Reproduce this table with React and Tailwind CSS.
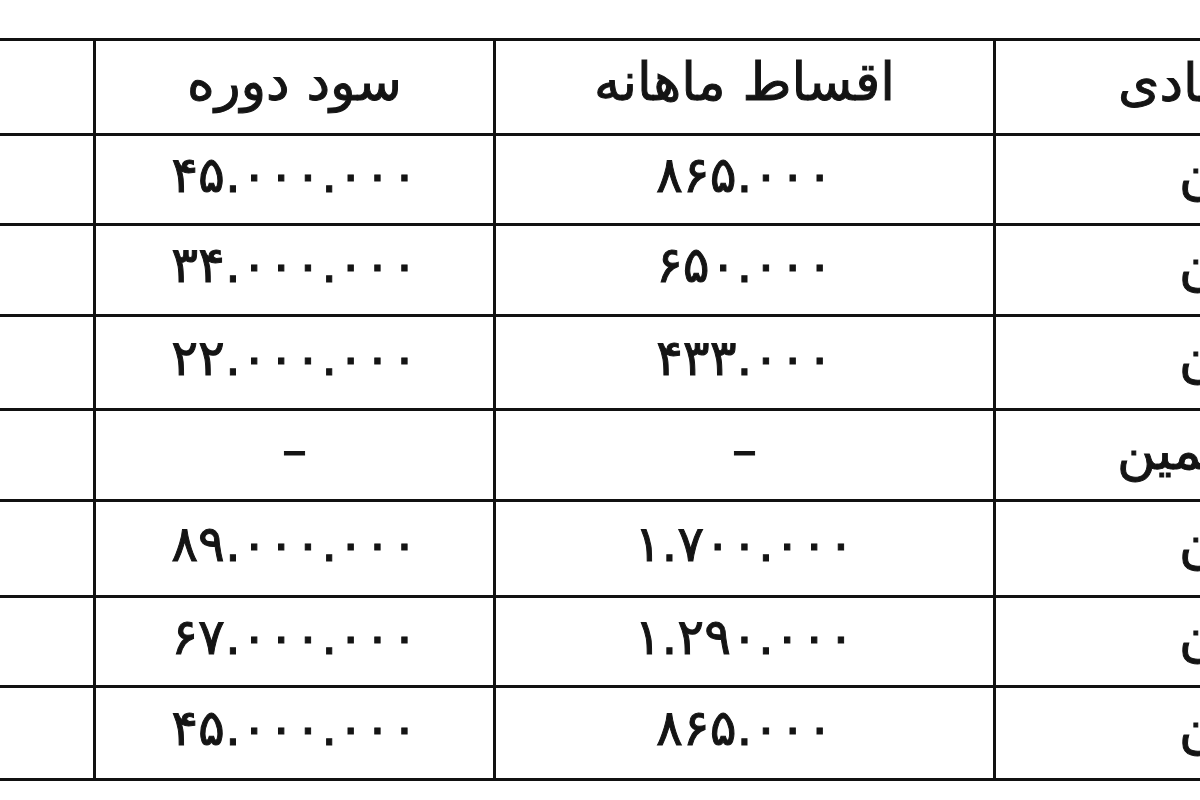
import React from "react";

// rows of the loan table, right column is cut by the frame
const rows = [
  { kind: "head", label: "وام عادی", a: "سود دوره", b: "اقساط ماهانه", h: "h-[92px]", pad: "pl-[122px]" },
  { label: "۱۰۰ میلیون", a: "۴۵.۰۰۰.۰۰۰", b: "۸۶۵.۰۰۰", h: "h-[87px]", pad: "pl-[183px]" },
  { label: "۷۵ میلیون", a: "۳۴.۰۰۰.۰۰۰", b: "۶۵۰.۰۰۰", h: "h-[88px]", pad: "pl-[183px]" },
  { label: "۵۰ میلیون", a: "۲۲.۰۰۰.۰۰۰", b: "۴۳۳.۰۰۰", h: "h-[91px]", pad: "pl-[183px]" },
  { label: "وام با تضمین", a: "–", b: "–", h: "h-[88px]", pad: "pl-[121px]" },
  { label: "۲۰۰ میلیون", a: "۸۹.۰۰۰.۰۰۰", b: "۱.۷۰۰.۰۰۰", h: "h-[93px]", pad: "pl-[183px]" },
  { label: "۱۵۰ میلیون", a: "۶۷.۰۰۰.۰۰۰", b: "۱.۲۹۰.۰۰۰", h: "h-[87px]", pad: "pl-[183px]" },
  { label: "۱۰۰ میلیون", a: "۴۵.۰۰۰.۰۰۰", b: "۸۶۵.۰۰۰", h: "h-[90px]", pad: "pl-[183px]" },
];

export default function App() {
  return (
    <div
      className="w-[1200px] h-[800px] overflow-hidden bg-white text-[#141414] [-webkit-text-stroke:1px_#141414]"
      style={{ fontFamily: '"DejaVu Sans", sans-serif' }}
    >
      <div className="mt-[38px] -ml-[17px] w-[1430px] bg-[#111] py-[3px]">
        <div className="grid grid-cols-[110px_397px_497px_420px] gap-[3px]">
          {rows.map((r, i) => {
            const size = r.kind === "head" ? "text-[53px] pb-[12px]" : "text-[50px] pb-[10px]";
            return (
              <React.Fragment key={i}>
                <div className={`${r.h} bg-white`}></div>
                <div className={`${r.h} ${size} bg-white flex items-center justify-center leading-none`} dir="rtl">
                  {r.a}
                </div>
                <div className={`${r.h} ${size} bg-white flex items-center justify-center leading-none`} dir="rtl">
                  {r.b}
                </div>
                <div className={`${r.h} ${r.pad} bg-white flex items-center text-[53px] pb-[10px] leading-none whitespace-nowrap`}>
                  <span dir="rtl">{r.label}</span>
                </div>
              </React.Fragment>
            );
          })}
        </div>
      </div>
    </div>
  );
}
